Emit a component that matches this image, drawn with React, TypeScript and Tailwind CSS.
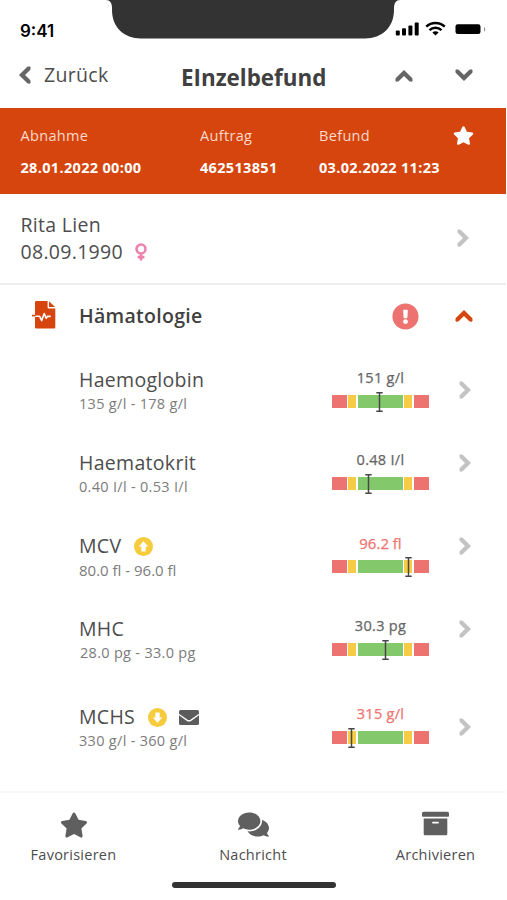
import React from 'react';
import { FaArchive, FaComments, FaExclamationCircle, FaStar } from 'react-icons/fa';

interface Result {
  name: string;
  range: string;
  value: string;
  marker: number;
  trend?: 'up' | 'down';
  hasMessage?: boolean;
  rowClass: string;
  rangeClass: string;
  valueClass: string;
  chevronClass: string;
}

const results: Result[] = [
  {
    name: 'Haemoglobin',
    range: '135 g/l - 178 g/l',
    value: '151 g/l',
    marker: 47,
    rowClass: 'h-[83px]',
    rangeClass: 'text-[14.5px] tracking-[0.3px]',
    valueClass: 'pt-[10px] text-[14.5px] text-[#666] tracking-[0.3px]',
    chevronClass: 'mt-[23px]',
  },
  {
    name: 'Haematokrit',
    range: '0.40 I/l - 0.53 I/l',
    value: '0.48 I/l',
    marker: 36,
    rowClass: 'h-[83px]',
    rangeClass: 'text-[14.5px] tracking-[0.3px]',
    valueClass: 'pt-[9px] text-[14.5px] text-[#666] tracking-[0.3px]',
    chevronClass: 'mt-[13px]',
  },
  {
    name: 'MCV',
    range: '80.0 fl - 96.0 fl',
    value: '96.2 fl',
    marker: 76.5,
    trend: 'up',
    rowClass: 'h-[83px]',
    rangeClass: 'text-[15px]',
    valueClass: 'pt-[9px] text-[15px] text-[#ee7470]',
    chevronClass: 'mt-[13px]',
  },
  {
    name: 'MHC',
    range: '28.0 pg - 33.0 pg',
    value: '30.3 pg',
    marker: 53.5,
    rowClass: 'h-[88px]',
    rangeClass: 'pl-px text-[14.5px] tracking-[0.3px]',
    valueClass: 'pt-[9px] text-[14.5px] text-[#666] tracking-[0.3px]',
    chevronClass: 'mt-[13px]',
  },
  {
    name: 'MCHS',
    range: '330 g/l - 360 g/l',
    value: '315 g/l',
    marker: 19,
    trend: 'down',
    hasMessage: true,
    rowClass: 'h-[96px]',
    rangeClass: 'text-[14.5px] tracking-[0.3px]',
    valueClass: 'pt-[9px] text-[14.5px] text-[#ee7470] tracking-[0.3px]',
    chevronClass: 'mt-[23px]',
  },
];

// points right, callers rotate it
const Chevron: React.FC<{ className: string }> = ({ className }) => (
  <svg viewBox="0 0 18 18" className={`size-[18px] shrink-0 ${className}`} fill="none" stroke="currentColor" strokeWidth="4.3">
    <path d="M4.9 1.9 L12 9 L4.9 16.1" />
    <path d="M4.9 1.9 L12 9 L4.9 16.1" strokeWidth="3" strokeLinecap="round" />
  </svg>
);

const VenusIcon: React.FC = () => (
  <svg viewBox="0 0 12 18" className="ml-[12px] h-[18px] w-[12px]" fill="none" stroke="#ee82ae" strokeWidth="2.6">
    <circle cx="6" cy="6" r="4.5" />
    <path d="M6 10.5 V17.6 M2.6 14.1 H9.4" />
  </svg>
);

const MailIcon: React.FC = () => (
  <svg viewBox="0 0 20 15" className="ml-[12px] h-[15px] w-[20px]">
    <rect width="20" height="15" rx="1.6" fill="#5c5c5c" />
    <path d="M-0.5 4.2 L8.3 10.4 Q10 11.5 11.7 10.4 L20.5 4.2" fill="none" stroke="#fff" strokeWidth="1.3" />
  </svg>
);

const TrendIcon: React.FC<{ direction: 'up' | 'down' }> = ({ direction }) => (
  <svg viewBox="0 0 20 20" className={direction === 'up' ? 'size-[19px]' : 'size-[19px] rotate-180'}>
    <circle cx="10" cy="10" r="10" fill="#f6cb3c" />
    <path d="M10 4.8 L14.4 9.8 H12 V14.9 H8 V9.8 H5.6 Z" fill="#fff" stroke="#fff" strokeWidth="0.6" strokeLinejoin="round" />
  </svg>
);

const RangeBar: React.FC<{ marker: number }> = ({ marker }) => (
  <div className="relative mt-[7px] flex h-[13px] w-[97px]">
    <div className="w-[15px] bg-[#ec7370]" />
    <div className="ml-px w-[8px] bg-[#f6cb45]" />
    <div className="ml-[2px] w-[45px] bg-[#83c96b]" />
    <div className="ml-px w-[8px] bg-[#f6cb45]" />
    <div className="ml-[2px] w-[15px] bg-[#ec7370]" />
    <svg
      viewBox="0 0 7 20"
      className="absolute -top-[3.5px] h-[20px] w-[7px]"
      style={{ left: marker - 3.5 }}
      fill="none"
      stroke="#484848"
      strokeWidth="1.5"
    >
      <path d="M0.3 0.8 H6.7 M3.5 0.8 V19.2 M0.3 19.2 H6.7" />
    </svg>
  </div>
);

const ResultRow: React.FC<{ result: Result }> = ({ result }) => (
  <div className={`flex items-start ${result.rowClass}`}>
    <div className="w-[253px] pl-[79px] whitespace-nowrap">
      <div className="flex h-[44px] items-center text-[19.5px] tracking-[0.3px]">
        <span>{result.name}</span>
        {result.trend && (
          <span className="ml-[13px]">
            <TrendIcon direction={result.trend} />
          </span>
        )}
        {result.hasMessage && <MailIcon />}
      </div>
      <div className={`-mt-[9px] leading-[22px] text-[#7c7c7c] ${result.rangeClass}`}>{result.range}</div>
    </div>
    <div className="ml-[79px] w-[97px]">
      <div
        className={`text-center leading-[20px] whitespace-nowrap [-webkit-text-stroke:0.25px_currentColor] ${result.valueClass}`}
      >
        {result.value}
      </div>
      <RangeBar marker={result.marker} />
    </div>
    <Chevron className={`ml-[27px] text-[#c3c3c3] ${result.chevronClass}`} />
  </div>
);

const StatusBar: React.FC = () => (
  <div className="relative flex h-[46px] items-start justify-between">
    <svg viewBox="0 0 294 39" className="absolute top-0 left-[106px] h-[39px] w-[294px]" fill="#333">
      <path d="M0 0 C4 0 6 3 6 8 V10 C6 27 18 38.5 35 38.5 H259 C276 38.5 288 27 288 10 V8 C288 3 290 0 294 0 Z" />
    </svg>
    <span className="pt-[21px] pl-[20px] font-['Inter'] text-[17px] leading-[20px] font-semibold text-black">9:41</span>
    <svg viewBox="0 0 92 16" className="mt-[21px] mr-[19px] h-[16px] w-[92px]" fill="#000">
      <rect x="0.8" y="9.5" width="4" height="5" rx="1" />
      <rect x="7" y="7.3" width="4" height="7.2" rx="1" />
      <rect x="13.4" y="4.6" width="4" height="9.9" rx="1" />
      <rect x="19.7" y="1.6" width="4" height="12.9" rx="1" />
      <g fill="none" stroke="#000" strokeWidth="2.4">
        <path d="M31.2 5.7 C36.4 0.8 44.6 0.8 49.8 5.7" />
        <path d="M34.5 9.2 C37.9 6 43.1 6 46.5 9.2" />
      </g>
      <path d="M37.4 11.4 C39.3 9.9 41.7 9.9 43.6 11.4 L40.5 14.5 Z" />
      <rect x="60.5" y="3.3" width="25" height="9.6" rx="2.2" />
      <rect x="89" y="6.3" width="1.2" height="4" rx="0.6" fill="#999" />
    </svg>
  </div>
);

const ReportIcon: React.FC = () => (
  <svg viewBox="0 0 24 28" className="h-[28px] w-[24px]">
    <path
      d="M4.2 0 H15.6 V6.2 Q15.6 7.5 16.9 7.5 H23.3 V26.3 Q23.3 27.6 22 27.6 H4.2 Q3 27.6 3 26.3 V1.3 Q3 0 4.2 0 Z M17 0.2 L23.1 6 H17 Z"
      fill="#d5450d"
    />
    <path d="M3 15.2 H7.5 L9.7 19.6 L12.2 12.6 L14.2 17.2 L15.4 15.4 H18.7" fill="none" stroke="#fff" strokeWidth="1.6" strokeLinejoin="round" />
    <path d="M0 14.6 H3.5" stroke="#d5450d" strokeWidth="1.6" />
  </svg>
);

const App: React.FC = () => {
  return (
    <div className="h-[900px] w-[507px] overflow-hidden bg-white font-['Open_Sans',sans-serif] text-[#4d4d4d]">
      <div className="flex h-full w-[506px] flex-col">
        <StatusBar />

        <header className="flex h-[62px] items-start">
          <button className="flex w-[181px] items-center pt-[15px] pl-[16px] text-[19.5px] leading-[28px] tracking-[0.3px]">
            <Chevron className="mr-[10px] rotate-180 text-[#666]" />
            Zurück
          </button>
          <h1 className="w-[213.5px] pt-[17px] text-[22.4px] leading-[30px] font-bold whitespace-nowrap text-[#404040]">
            EInzelbefund
          </h1>
          <Chevron className="mt-[21px] -rotate-90 text-[#666]" />
          <Chevron className="mt-[20px] ml-[42px] rotate-90 text-[#666]" />
        </header>

        <section className="flex h-[86px] items-start bg-[#d5450d] pt-[18px] pl-[20.5px] text-[14.5px] leading-[20px] tracking-[0.33px] whitespace-nowrap text-white">
          <div className="w-[179.5px]">
            <div className="text-[#fbd9cb]">Abnahme</div>
            <div className="mt-[12px] font-bold">28.01.2022 00:00</div>
          </div>
          <div className="w-[119px]">
            <div className="text-[#fbd9cb]">Auftrag</div>
            <div className="mt-[12px] font-bold">462513851</div>
          </div>
          <div className="w-[134px]">
            <div className="text-[#fbd9cb]">Befund</div>
            <div className="mt-[12px] font-bold">03.02.2022 11:23</div>
          </div>
          <FaStar className="-mt-px size-[21px]" />
        </section>

        <section className="flex h-[91px] items-start justify-between border-b-2 border-[#eee] pr-[34px] pl-[20.5px]">
          <div className="pt-[17px] text-[19.5px] leading-[27px] tracking-[0.3px]">
            <div>Rita Lien</div>
            <div className="flex items-center">
              08.09.1990
              <VenusIcon />
            </div>
          </div>
          <Chevron className="mt-[35px] text-[#c3c3c3]" />
        </section>

        <section className="flex h-[73px] items-start pl-[32px]">
          <div className="w-[47px] pt-[16px]">
            <ReportIcon />
          </div>
          <h2 className="w-[313px] pt-[17px] text-[19.5px] leading-[28px] font-semibold tracking-[0.3px] text-[#404040]">
            Hämatologie
          </h2>
          <FaExclamationCircle className="mt-[18px] size-[27px] text-[#ec7370]" />
          <Chevron className="mt-[22px] ml-[36px] -rotate-90 text-[#d5450d]" />
        </section>

        <main>
          {results.map((result) => (
            <ResultRow key={result.name} result={result} />
          ))}
        </main>

        <nav className="flex h-[91px] justify-between border-t-2 border-[#f8f8f8] px-[30px] pt-[18px] text-[14.5px] leading-[20px] tracking-[0.25px]">
          <div className="flex w-[87px] flex-col items-center">
            <FaStar className="size-[28px] text-[#5f5f5f]" />
            <span className="mt-[6px]">Favorisieren</span>
          </div>
          <div className="mr-[6px] flex w-[80px] flex-col items-center">
            <FaComments className="-mt-[2px] size-[31px] text-[#5f5f5f]" />
            <span className="mt-[5px]">Nachricht</span>
          </div>
          <div className="flex w-[81px] flex-col items-center">
            <FaArchive className="-mt-px size-[27px] text-[#5f5f5f]" />
            <span className="mt-[8px]">Archivieren</span>
          </div>
        </nav>
        <div className="ml-[172px] h-[6px] w-[164px] rounded-full bg-[#333]" />
      </div>
    </div>
  );
};

export default App;
